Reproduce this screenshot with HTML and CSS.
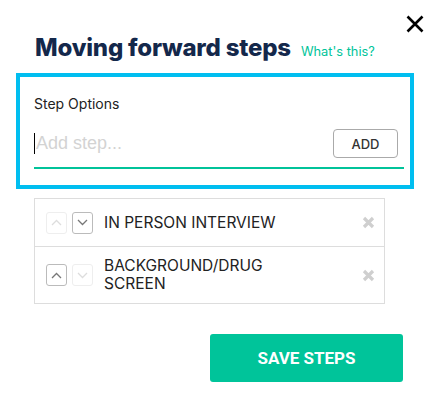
FILE: index.html
```html
<!DOCTYPE html>
<html lang="en">
<head>
    <meta charset="UTF-8">
    <title>Moving forward steps</title>
    <link rel="stylesheet" href="styles.css">
</head>
<body>
    <div class="modal">
        <!-- fechar -->
        <button class="close" aria-label="Close">
            <svg width="18" height="18" viewBox="0 0 18 18"><path d="M1.5 1.5 L16.5 16.5 M16.5 1.5 L1.5 16.5" stroke="#000" stroke-width="2.6" fill="none"/></svg>
        </button>

        <div class="header">
            <h1>Moving forward steps</h1>
            <a class="help" href="#">What's this?</a>
        </div>

        <div class="step-form">
            <label class="label">Step Options</label>
            <div class="input-row">
                <span class="caret"></span>
                <input class="step-input" type="text" placeholder="Add step...">
                <button class="add-btn">ADD</button>
            </div>
        </div>

        <ul class="steps">
            <li class="step">
                <div class="arrows">
                    <span class="arrow disabled"><svg width="11" height="7" viewBox="0 0 11 7"><path d="M1 6 L5.5 1.5 L10 6" stroke="currentColor" stroke-width="1.3" fill="none"/></svg></span>
                    <span class="arrow"><svg width="11" height="7" viewBox="0 0 11 7"><path d="M1 1 L5.5 5.5 L10 1" stroke="currentColor" stroke-width="1.3" fill="none"/></svg></span>
                </div>
                <span class="step-name">IN PERSON INTERVIEW</span>
                <span class="remove"><svg width="13" height="13" viewBox="0 0 13 13"><path d="M2 2 L11 11 M11 2 L2 11" stroke="currentColor" stroke-width="3.2" fill="none"/></svg></span>
            </li>
            <li class="step">
                <div class="arrows">
                    <span class="arrow"><svg width="11" height="7" viewBox="0 0 11 7"><path d="M1 6 L5.5 1.5 L10 6" stroke="currentColor" stroke-width="1.3" fill="none"/></svg></span>
                    <span class="arrow disabled"><svg width="11" height="7" viewBox="0 0 11 7"><path d="M1 1 L5.5 5.5 L10 1" stroke="currentColor" stroke-width="1.3" fill="none"/></svg></span>
                </div>
                <span class="step-name">BACKGROUND/DRUG SCREEN</span>
                <span class="remove"><svg width="13" height="13" viewBox="0 0 13 13"><path d="M2 2 L11 11 M11 2 L2 11" stroke="currentColor" stroke-width="3.2" fill="none"/></svg></span>
            </li>
        </ul>

        <div class="footer">
            <button class="save-btn">SAVE STEPS</button>
        </div>
    </div>
</body>
</html>
```

FILE: styles.css
```css
/* pagina */
body {
    margin: 0;
    background: #fff;
    font-family: "Inter", "Noto Sans", sans-serif;
    color: #222;
}

.modal {
    position: relative;
    width: 439px;
    height: 414px;
    padding-top: 33px;
    box-sizing: border-box;
}

/* botao fechar */
.close {
    position: absolute;
    top: 15px;
    right: 15px;
    padding: 0;
    border: none;
    background: none;
    line-height: 0;
    cursor: pointer;
}

/* titulo */
.header {
    display: flex;
    align-items: baseline;
    gap: 10px;
    margin-left: 35px;
}

.header h1 {
    margin: 0;
    font-size: 24px;
    line-height: 30px;
    font-weight: 800;
    color: #14284b;
    letter-spacing: -0.2px;
}

.help {
    font-size: 12.8px;
    color: #00c49a;
    text-decoration: none;
}

/* caixa de adicionar passo */
.step-form {
    width: 398px;
    box-sizing: border-box;
    margin: 10px 0 0 16px;
    border: 4px solid #00bef0;
    padding: 19px 6px 16px 14px;
}

.label {
    display: block;
    font-size: 14px;
    line-height: 16px;
    color: #222;
}

.input-row {
    display: flex;
    align-items: center;
    margin-top: 17px;
    padding-bottom: 9px;
    border-bottom: 2px solid #00c39a;
}

.caret {
    width: 1px;
    height: 21px;
    background: #000;
}

.step-input {
    flex: 1;
    border: none;
    outline: none;
    padding: 0 0 0 1px;
    font-family: "Liberation Sans", Arial, sans-serif;
    font-size: 18px;
    color: #222;
    background: none;
}

.step-input::placeholder {
    color: #d3d3d3;
}

.add-btn {
    width: 65px;
    height: 29px;
    margin-right: 6px;
    border: 1px solid #aaa;
    border-radius: 4px;
    background: #fff;
    font-family: "Inter", sans-serif;
    font-size: 13px;
    font-weight: 500;
    color: #333;
}

/* lista de passos */
.steps {
    list-style: none;
    width: 351px;
    margin: 9px 0 0 34px;
    padding: 0;
    border: 1px solid #ddd;
    box-sizing: border-box;
}

.step {
    display: flex;
    align-items: center;
    padding: 10px 9px 10px 11px;
    min-height: 27px;
}

.step + .step {
    border-top: 1px solid #ddd;
}

.arrows {
    display: flex;
    gap: 5px;
    margin-right: 11px;
}

.arrow {
    width: 21px;
    height: 22px;
    box-sizing: border-box;
    border: 1px solid #bbb;
    border-radius: 3px;
    display: flex;
    align-items: center;
    justify-content: center;
    color: #777;
}

.arrow.disabled {
    border-color: #eee;
    color: #ddd;
}

.step-name {
    flex: 1;
    max-width: 200px;
    font-size: 15.5px;
    line-height: 18px;
    color: #222;
}

.remove {
    margin-left: auto;
    color: #cfcfcf;
    line-height: 0;
}

/* rodape */
.footer {
    display: flex;
    justify-content: flex-end;
    margin: 30px 36px 0 0;
}

.save-btn {
    width: 193px;
    height: 48px;
    border: none;
    border-radius: 3px;
    background: #00c49a;
    color: #fff;
    font-family: "Roboto", sans-serif;
    font-weight: 700;
    font-size: 17px;
    cursor: pointer;
}
```
